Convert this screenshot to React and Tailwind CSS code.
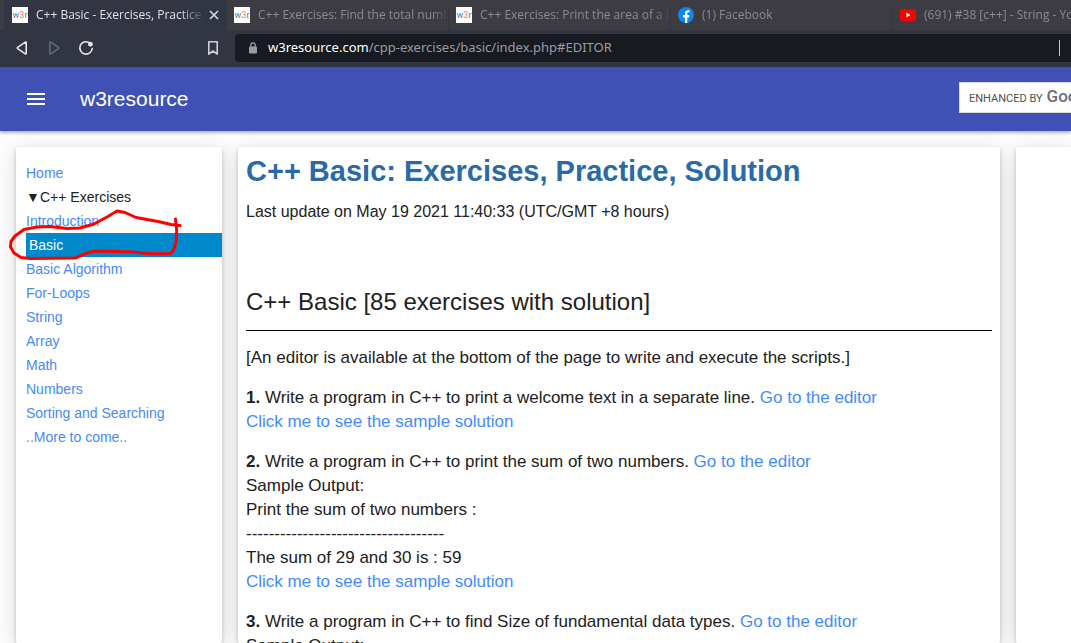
import { Fragment } from "react";

const W3Icon = () => (
  <span className="block h-4 w-4 shrink-0 bg-white text-center font-['Roboto',sans-serif] text-[9px] leading-4 text-[#4a78b8]">
    w<span className="text-[#f0803c]">3</span>r
  </span>
);

const FacebookIcon = () => (
  <svg viewBox="0 0 16 16" className="h-4 w-4 shrink-0" aria-hidden="true">
    <circle cx="8" cy="8" r="8" fill="#0d86f0" />
    <path d="M7 16V10.4H5V8.1h2V6.4c0-2.1 1.2-3.2 3-3.2.9 0 1.6.1 1.6.1v2h-1c-1 0-1.3.6-1.3 1.2v1.6h2.2l-.4 2.3H9.3V16z" fill="#fff" />
  </svg>
);

const YoutubeIcon = () => (
  <svg viewBox="0 0 16 16" className="h-4 w-4 shrink-0" aria-hidden="true">
    <rect y="2" width="16" height="12" rx="3" fill="#f00" />
    <path d="M6.4 5.6v4.8L10.4 8z" fill="#fff" />
  </svg>
);

const tabs = [
  { title: "C++ Basic - Exercises, Practice,", icon: W3Icon, active: true },
  { title: "C++ Exercises: Find the total numb", icon: W3Icon },
  { title: "C++ Exercises: Print the area of a h", icon: W3Icon },
  { title: "(1) Facebook", icon: FacebookIcon },
  { title: "(691) #38 [c++] - String - YouTube", icon: YoutubeIcon, last: true },
];

function Tab({ title, icon: Icon, active, last }) {
  return (
    <div
      className={
        active
          ? "flex w-[223px] shrink-0 items-center gap-1 rounded-t bg-[#323542] px-2 text-[#e0e1e5]"
          : "flex w-[222px] shrink-0 items-center pl-[7px] text-[#8b8b90]"
      }
    >
      <button className="flex min-w-0 flex-1 items-center gap-2 text-left">
        <Icon />
        <span
          className={
            active
              ? "flex-1 overflow-hidden whitespace-nowrap font-medium [mask-image:linear-gradient(to_right,#000_85%,transparent)]"
              : "flex-1 overflow-hidden whitespace-nowrap [mask-image:linear-gradient(to_right,#000_92%,transparent)]"
          }
        >
          {title}
        </span>
      </button>
      {active && (
        <button aria-label="Close tab">
          <svg viewBox="0 0 10 10" className="h-[10px] w-[10px]" stroke="currentColor" strokeWidth="1.5">
            <path d="M1 1l8 8M9 1L1 9" />
          </svg>
        </button>
      )}
      {!active && !last && <span className="h-6 w-px self-end bg-[#35353a]" />}
    </div>
  );
}

function BrowserBar() {
  return (
    <div className="shrink-0 bg-[#323542] font-['Open_Sans','Noto_Sans',sans-serif]">
      <div className="flex h-[30px] overflow-hidden bg-[#3c3c42] pl-1 text-[12px]">
        {tabs.map((t) => (
          <Tab key={t.title} {...t} />
        ))}
      </div>
      <div className="flex h-[37px] items-center pb-px text-[#e6e7ea]">
        <button aria-label="Back" className="ml-[14px]">
          <svg viewBox="0 0 16 16" className="h-4 w-4" fill="none" stroke="currentColor" strokeWidth="1.6" strokeLinejoin="round">
            <path d="M12.2 2.6v10.8q0 .9-.8.4L3.6 8.6q-.8-.6 0-1.2l7.8-5.2q.8-.5.8.4z" />
          </svg>
        </button>
        <button aria-label="Forward" className="ml-4 text-[#6c6e79]">
          <svg viewBox="0 0 16 16" className="h-4 w-4" fill="none" stroke="currentColor" strokeWidth="1.4" strokeLinejoin="round">
            <path d="M3.8 2.6v10.8q0 .9.8.4l7.8-5.2q.8-.6 0-1.2L4.6 2.2q-.8-.5-.8.4z" />
          </svg>
        </button>
        <button aria-label="Reload" className="ml-4">
          <svg viewBox="0 0 16 16" className="h-4 w-4" fill="none" stroke="currentColor" strokeWidth="1.6">
            <path d="M10.4 2.2A6.2 6.2 0 1 0 14.2 8.5" strokeLinecap="round" />
            <circle cx="12.4" cy="4.2" r="2.4" fill="currentColor" stroke="none" />
          </svg>
        </button>
        <button aria-label="Bookmark" className="ml-[111px]">
          <svg viewBox="0 0 16 16" className="h-4 w-4" fill="none" stroke="#cfd0d5" strokeWidth="1.6" strokeLinejoin="round">
            <path d="M3.8 1.8h8.4v12.4L8 11l-4.2 3.2z" />
          </svg>
        </button>
        <div className="ml-[14px] flex h-7 min-w-0 flex-1 items-center rounded-l bg-[#171a21] pl-[13px] font-['Noto_Sans',sans-serif] text-[13px]">
          <svg viewBox="0 0 10 12" className="mr-[10px] h-3 w-[10px]" aria-hidden="true">
            <rect x="1" y="4.5" width="8" height="7" rx="1" fill="#9a9ca5" />
            <path d="M2.8 5V3a2.2 2.2 0 0 1 4.4 0v2" fill="none" stroke="#9a9ca5" strokeWidth="1.3" />
          </svg>
          <span className="text-white">w3resource.com</span>
          <span className="flex-1 text-[#9a9ca2]">/cpp-exercises/basic/index.php#EDITOR</span>
          <span className="mr-[11px] h-4 w-px bg-[#c3c4c8]" />
        </div>
      </div>
    </div>
  );
}

const sections = ["Basic Algorithm", "For-Loops", "String", "Array", "Math", "Numbers", "Sorting and Searching", "..More to come.."];

function Scribble() {
  return (
    <svg
      viewBox="0 200 200 70"
      className="pointer-events-none absolute -top-[33px] -left-[26px] z-10 h-[70px] w-[200px] max-w-none"
      fill="none"
      stroke="#ff0000"
      strokeWidth="3"
      strokeLinejoin="round"
      strokeLinecap="round"
      aria-hidden="true"
    >
      <path d="M180 225.5L171 224.5L158 221.5L136 217.5L125 212.5L117 211L107 217L94 224L80 228L67 228.5L50 226.5L37 227L24 229.5L15 236L11 241.5L10.5 247L14 253L21 257.5L30 258.5L75 258L87 253L95 251L133 252L150 253.7L170 253.7L173 251L176 243L176.7 230L175.5 219" />
    </svg>
  );
}

function Sidebar() {
  return (
    <nav className="w-[206px] shrink-0 rounded-xs bg-white pt-[14px] pl-[10px] text-[14px] leading-6 text-[#448aff] shadow-[0_2px_4px_rgba(0,0,0,0.2),0_4px_20px_rgba(0,0,0,0.14)]">
      <ul>
        <li><a href="#home">Home</a></li>
        <li className="text-[#212121]"><span className="inline-block w-[14px]">▼</span>C++ Exercises</li>
        <li><a href="#introduction">Introduction</a></li>
        <li className="relative bg-[#0088cc] pl-[3px]">
          <a href="#basic" className="text-white">Basic</a>
          <Scribble />
        </li>
        {sections.map((s) => (
          <li key={s}><a href="#section">{s}</a></li>
        ))}
      </ul>
    </nav>
  );
}

const Link = ({ children }) => <a href="#editor" className="text-[#448aff]">{children}</a>;

const exercises = [
  { task: "Write a program in C++ to print a welcome text in a separate line.", output: [], solution: true },
  {
    task: "Write a program in C++ to print the sum of two numbers.",
    output: ["Sample Output:", "Print the sum of two numbers :", "-----------------------------------", "The sum of 29 and 30 is : 59"],
    solution: true,
  },
  { task: "Write a program in C++ to find Size of fundamental data types.", output: ["Sample Output:"] },
];

export default function App() {
  return (
    <div className="flex h-screen flex-col overflow-hidden bg-[#fdfdfd] font-['Liberation_Sans',Arial,sans-serif]">
      <BrowserBar />
      <header className="z-10 flex h-16 shrink-0 items-center bg-[#3f51b5] pl-6 text-white shadow-[0_2px_3px_rgba(0,0,0,0.3)]">
        <button aria-label="Menu">
          <svg viewBox="0 0 24 24" className="h-6 w-6" fill="currentColor">
            <path d="M3 18h18v-2H3v2zm0-5h18v-2H3v2zm0-7v2h18V6H3z" />
          </svg>
        </button>
        <span className="ml-8 flex-1 text-[21px]">w3resource</span>
        <div className="mb-[3px] flex h-[31px] w-28 items-baseline overflow-hidden whitespace-nowrap border border-r-0 border-[#d9d9d9] bg-white pl-[9px] font-['Roboto',sans-serif] text-[11px] leading-[26px] text-[#4d5156]">
          ENHANCED BY
          <span className="ml-1 text-[17px] font-medium text-[#6b6f75]">Google</span>
        </div>
      </header>
      <div className="flex min-h-0 flex-1 gap-4 pt-4 pl-4">
        <Sidebar />
        <main className="min-w-0 flex-1 rounded-xs bg-white px-2 text-[17px] leading-6 text-[#212121] shadow-[0_2px_4px_rgba(0,0,0,0.2),0_4px_20px_rgba(0,0,0,0.14)]">
          <h1 className="pt-1 text-[29px] leading-10 font-bold text-[#2a6aab]">C++ Basic: Exercises, Practice, Solution</h1>
          <p className="mt-[9px] text-[16px]">Last update on May 19 2021 11:40:33 (UTC/GMT +8 hours)</p>
          <h2 className="mt-[62px] border-b border-black pb-3 text-[24px] leading-8">C++ Basic [85 exercises with solution]</h2>
          <p className="mt-[15px]">[An editor is available at the bottom of the page to write and execute the scripts.]</p>
          {exercises.map((e, i) => (
            <p key={e.task} className="mt-4">
              <strong>{i + 1}.</strong> {e.task} <Link>Go to the editor</Link>
              {e.output.map((line) => (
                <Fragment key={line}>
                  <br />
                  {line}
                </Fragment>
              ))}
              {e.solution && (
                <>
                  <br />
                  <Link>Click me to see the sample solution</Link>
                </>
              )}
            </p>
          ))}
        </main>
        <aside className="w-[55px] shrink-0 rounded-l-xs bg-white shadow-[0_2px_4px_rgba(0,0,0,0.2),0_4px_20px_rgba(0,0,0,0.14)]" />
      </div>
    </div>
  );
}
